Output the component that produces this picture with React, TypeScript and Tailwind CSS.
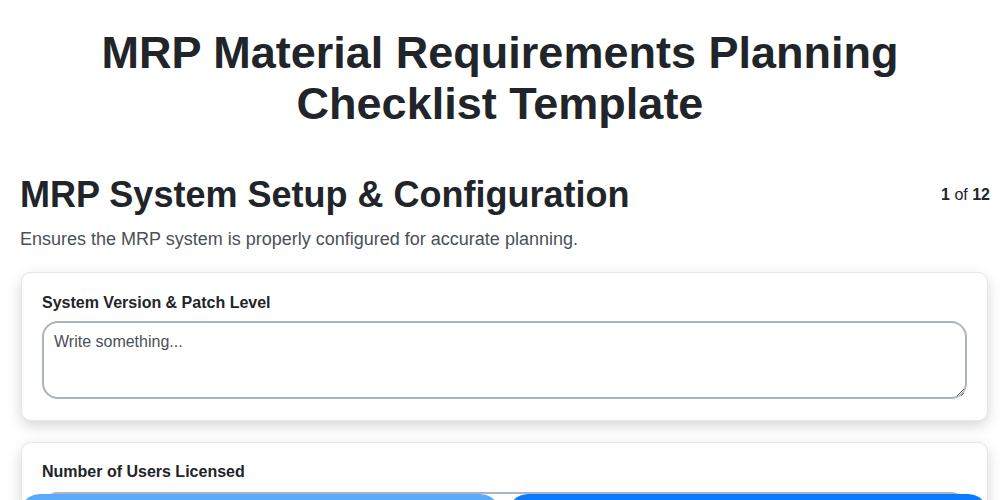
import React from "react";

export default function App() {
  return (
    <div className="relative h-[500px] w-full overflow-hidden bg-white text-[#212529] font-['Liberation_Sans',Arial,sans-serif]">
      <h1 className="mt-[27px] text-center text-[45px] font-bold leading-[51px]">
        MRP Material Requirements Planning
        <br />
        Checklist Template
      </h1>

      <div className="pl-5 pr-3 pt-[44px]">
        <div className="flex items-center justify-between">
          <h2 className="text-[36px] font-bold leading-[43px]">MRP System Setup &amp; Configuration</h2>
          <div className="mr-[-2px] text-[16px] leading-6">
            <span className="font-bold">1</span> of <span className="font-bold">12</span>
          </div>
        </div>
        <p className="mt-[10px] text-[18px] leading-[27px] text-[#495057]">
          Ensures the MRP system is properly configured for accurate planning.
        </p>

        <div className="ml-px mt-[19px] flex flex-col gap-[21px]">
          <div className="rounded-[10px] border border-[#e6e6ec] bg-white px-5 pb-[21px] pt-[18px] shadow-[0_5px_14px_rgba(0,0,0,0.16)]">
            <label className="block text-[16px] font-bold leading-6">System Version &amp; Patch Level</label>
            <textarea
              placeholder="Write something..."
              className="mt-[6px] block h-[78px] w-full rounded-[16px] border-2 border-[#adb4bb] bg-white px-[10px] pb-[6px] pt-[7px] text-[16px] leading-6 text-[#212529] placeholder:text-[#4a5056] outline-none"
            />
          </div>

          <div className="rounded-[10px] border border-[#e6e6ec] bg-white px-5 pb-[21px] pt-[17px] shadow-[0_5px_14px_rgba(0,0,0,0.16)]">
            <label className="block text-[16px] font-bold leading-6">Number of Users Licensed</label>
            <input
              type="text"
              className="mt-[8px] block h-[44px] w-full rounded-[16px] border-2 border-[#adb4bb] bg-white px-[10px] text-[16px] outline-none"
            />
          </div>
        </div>
      </div>

      <div className="absolute left-0 right-0 top-[494px] grid grid-cols-2 gap-2 pl-5 pr-3">
        <button className="h-[48px] rounded-[20px] bg-[#5aaaf9]" />
        <button className="h-[48px] rounded-[20px] bg-[#0a7bff]" />
      </div>
    </div>
  );
}
